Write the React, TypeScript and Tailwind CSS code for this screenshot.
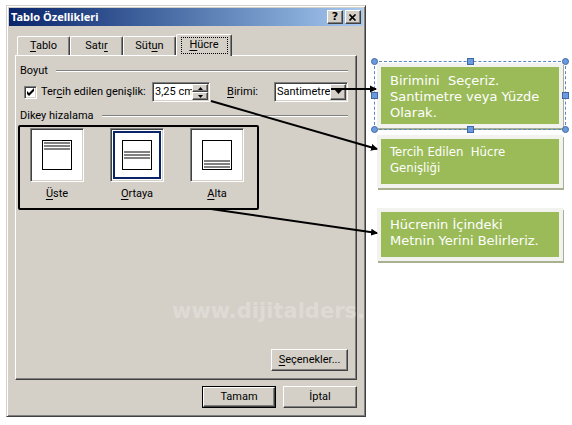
import React, { useState } from "react";

const raised =
  "border border-t-white border-l-white border-r-[#404040] border-b-[#404040] bg-[#d4d0c8] shadow-[inset_-1px_-1px_0_#808080]";
const sunken =
  "border border-t-[#808080] border-l-[#808080] border-r-white border-b-white bg-white shadow-[inset_1px_1px_0_#404040,inset_-1px_-1px_0_#d4d0c8]";

function Key({ children }: { children: React.ReactNode }) {
  return <span className="underline underline-offset-2">{children}</span>;
}

function GroupTitle({ children }: { children: React.ReactNode }) {
  return (
    <div className="flex h-4 items-center gap-2 pl-0.5 leading-4">
      <h2>{children}</h2>
      <div className="h-0.5 flex-1 border-t border-[#808080] bg-white" />
    </div>
  );
}

function Tab({ children, active }: { children: React.ReactNode; active?: boolean }) {
  return (
    <button
      type="button"
      role="tab"
      aria-selected={!!active}
      className={
        active
          ? "relative -mb-px flex h-[22px] w-[56px] items-center justify-center rounded-t-[2px] border border-b-0 border-t-white border-l-white border-r-[#404040] bg-[#d4d0c8] shadow-[inset_-1px_0_0_#808080]"
          : "flex h-[19px] w-[53px] items-center justify-center rounded-t-[2px] border border-b-0 border-t-white border-l-white border-r-[#404040] shadow-[inset_-1px_0_0_#808080]"
      }
    >
      {active ? (
        <span className="flex h-[17px] w-[47px] items-center justify-center border border-dotted border-black">
          <span>{children}</span>
        </span>
      ) : (
        <span>{children}</span>
      )}
    </button>
  );
}

function AlignTile({
  lines,
  selected,
  onSelect,
  children,
}: {
  lines: number;
  selected: boolean;
  onSelect: () => void;
  children: React.ReactNode;
}) {
  return (
    <button
      type="button"
      aria-pressed={selected}
      onClick={onSelect}
      className="flex w-[54px] flex-col items-center gap-1"
    >
      <span className={`flex h-[54px] w-[54px] items-center justify-center ${sunken}`}>
        <span
          className={
            selected
              ? "flex h-12 w-12 items-center justify-center border-2 border-[#0a246a]"
              : "flex h-12 w-12 items-center justify-center"
          }
        >
          <svg width="30" height="30" viewBox="0 0 30 30" shapeRendering="crispEdges">
            <rect x="0.5" y="0.5" width="29" height="29" fill="white" stroke="black" />
            {[0, 3, 6].map((d) => (
              <rect key={d} x="2" y={lines + d} width="26" height="2" fill="#808080" />
            ))}
          </svg>
        </span>
      </span>
      <span className="leading-4">{children}</span>
    </button>
  );
}

function Callout({ children, className }: { children: React.ReactNode; className: string }) {
  return (
    <div
      className={`border-4 border-[#f2f2ee] bg-[#9bbb59] pl-[9px] text-[13px] leading-4 text-white shadow-[1px_2px_0_#a9b090] ${className}`}
    >
      {children}
    </div>
  );
}

function Arrow({ x1, y1, x2, y2 }: { x1: number; y1: number; x2: number; y2: number }) {
  return (
    <line x1={x1} y1={y1} x2={x2} y2={y2} stroke="black" strokeWidth="2" markerEnd="url(#head)" />
  );
}

const handle = "absolute h-[7px] w-[7px] border border-[#41699f] bg-[#6a9ae0]";

export default function App() {
  const [align, setAlign] = useState("mid");
  return (
    <main className="relative flex w-full max-w-[572px] items-start bg-white pt-[5px] pr-[9px] pb-2 pl-[6px] font-['Roboto','DejaVu_Sans_Condensed',sans-serif] text-[11px] text-black">
      <section
        role="dialog"
        aria-label="Tablo Özellikleri"
        className="flex-1 border border-t-[#d4d0c8] border-l-[#d4d0c8] border-r-[#404040] border-b-[#404040] bg-[#d4d0c8] p-0.5 shadow-[inset_1px_1px_0_white,inset_-1px_-1px_0_#808080]"
      >
        <header className="flex h-[18px] items-center gap-0.5 bg-linear-to-r from-[#0a246a] to-[#a6caf0] px-0.5">
          <h1 className="flex-1 font-['Noto_Sans',sans-serif] font-bold text-white">Tablo Özellikleri</h1>
          <button
            type="button"
            aria-label="Yardım"
            className={`flex h-[14px] w-4 items-center justify-center font-['DejaVu_Sans',sans-serif] text-[11px] leading-3 font-bold ${raised}`}
          >
            ?
          </button>
          <button
            type="button"
            aria-label="Kapat"
            className={`flex h-[14px] w-4 items-center justify-center ${raised}`}
          >
            <svg width="8" height="7" viewBox="0 0 8 7">
              <path d="M0.5 0.5L6.5 6.5M6.5 0.5L0.5 6.5" stroke="black" strokeWidth="1.6" />
            </svg>
          </button>
        </header>

        <div className="px-[6px] pt-2 pb-[6px]">
          <div role="tablist" className="flex items-end pl-0.5">
            <Tab><Key>T</Key>ablo</Tab>
            <Tab>Satı<Key>r</Key></Tab>
            <Tab>Süt<Key>u</Key>n</Tab>
            <Tab active><Key>H</Key>ücre</Tab>
          </div>

          <div
            role="tabpanel"
            className="flex min-h-[325px] flex-col border border-t-white border-l-white border-r-[#404040] border-b-[#404040] pt-[7px] pr-2 pb-2 pl-0.5 shadow-[inset_-1px_-1px_0_#808080]"
          >
            <GroupTitle>Boyut</GroupTitle>

            <div className="mt-[3px] flex h-5 items-center pl-[6px]">
              <label className="flex w-32 items-center gap-1 whitespace-nowrap">
                <span className={`grid h-[13px] w-[13px] shrink-0 ${sunken}`}>
                  <input
                    type="checkbox"
                    defaultChecked
                    className="peer col-start-1 row-start-1 h-full w-full appearance-none"
                  />
                  <svg
                    className="pointer-events-none invisible col-start-1 row-start-1 peer-checked:visible"
                    width="11"
                    height="11"
                    viewBox="0 0 11 11"
                  >
                    <path d="M2 4v3l2 2 5-5V1L4 6z" fill="black" />
                  </svg>
                </span>
                <span>
                  Ter<Key>c</Key>ih edilen genişlik:
                </span>
              </label>
              <div className={`flex h-5 w-[58px] p-px ${sunken}`}>
                <input
                  aria-label="Tercih edilen genişlik"
                  defaultValue="3,25 cm"
                  className="w-0 min-w-0 flex-1 pl-px outline-none"
                />
                <div className="flex w-4 flex-col">
                  <button
                    type="button"
                    aria-label="Artır"
                    className={`flex h-2 items-center justify-center ${raised}`}
                  >
                    <svg width="5" height="3" viewBox="0 0 5 3"><path d="M0 3L2.5 0L5 3z" /></svg>
                  </button>
                  <button
                    type="button"
                    aria-label="Azalt"
                    className={`flex h-2 items-center justify-center ${raised}`}
                  >
                    <svg width="5" height="3" viewBox="0 0 5 3"><path d="M0 0L2.5 3L5 0z" /></svg>
                  </button>
                </div>
              </div>
              <label htmlFor="unit" className="ml-auto pr-4">
                <Key>B</Key>irimi:
              </label>
              <div className={`grid h-5 w-[74px] p-px ${sunken}`}>
                <select
                  id="unit"
                  className="col-start-1 row-start-1 h-4 w-full appearance-none pl-px leading-4 outline-none"
                >
                  <option>Santimetre</option>
                  <option>Yüzde</option>
                </select>
                <span
                  className={`pointer-events-none col-start-1 row-start-1 flex h-4 w-4 items-center justify-center justify-self-end ${raised}`}
                >
                  <svg width="7" height="4" viewBox="0 0 7 4"><path d="M0 0L3.5 4L7 0z" /></svg>
                </span>
              </div>
            </div>

            <div className="mt-[6px]">
              <GroupTitle>Dikey hizalama</GroupTitle>
            </div>

            <div className="mt-px flex h-[85px] w-[241px] gap-[26px] rounded-[2px] border-2 border-black pt-px pl-[10px]">
              <AlignTile lines={2} selected={align === "top"} onSelect={() => setAlign("top")}>
                <Key>Ü</Key>ste
              </AlignTile>
              <AlignTile lines={11} selected={align === "mid"} onSelect={() => setAlign("mid")}>
                <Key>O</Key>rtaya
              </AlignTile>
              <AlignTile lines={20} selected={align === "bottom"} onSelect={() => setAlign("bottom")}>
                <Key>A</Key>lta
              </AlignTile>
            </div>

            <button type="button" className={`mt-auto h-[22px] w-[77px] self-end ${raised}`}>
              <Key>S</Key>eçenekler...
            </button>
          </div>

          <footer className="mt-[6px] flex justify-end gap-[7px]">
            <div className="border border-black">
              <button type="button" className={`block h-5 w-[72px] ${raised}`}>
                Tamam
              </button>
            </div>
            <button type="button" className={`h-[22px] w-[74px] ${raised}`}>
              İptal
            </button>
          </footer>
        </div>
      </section>

      <aside className="ml-[11px] w-[186px] shrink-0 pt-[58px] whitespace-nowrap">
        <div className="relative">
          <Callout className="h-[65px] pt-[6px] font-['DejaVu_Sans',sans-serif]">
            Birimini&nbsp; Seçeriz.
            <br />
            Santimetre veya Yüzde
            <br />
            Olarak.
          </Callout>
          <div className="pointer-events-none absolute -inset-x-[3px] -inset-y-[2px] border border-dashed border-[#5b86c4]">
            <i className={`${handle} -top-1 -left-1 rounded-full`} />
            <i className={`${handle} -top-1 left-[92px]`} />
            <i className={`${handle} -top-1 -right-1 rounded-full`} />
            <i className={`${handle} top-[30px] -left-1`} />
            <i className={`${handle} top-[30px] -right-1`} />
            <i className={`${handle} -bottom-1 -left-1 rounded-full`} />
            <i className={`${handle} -bottom-1 left-[92px]`} />
            <i className={`${handle} -right-1 -bottom-1 rounded-full`} />
          </div>
        </div>
        <Callout className="mt-[7px] h-[53px] pt-[5px] font-['DejaVu_Sans_Condensed','DejaVu_Sans',sans-serif]">
          Tercih Edilen&nbsp; Hücre
          <br />
          Genişliği
        </Callout>
        <Callout className="mt-5 h-[53px] pt-[5px] font-['DejaVu_Sans',sans-serif]">
          Hücrenin İçindeki
          <br />
          Metnin Yerini Belirleriz.
        </Callout>
      </aside>

      <div className="pointer-events-none absolute top-[299px] left-[172px] font-['DejaVu_Sans',sans-serif] text-[21px] leading-6 font-bold text-white/25">
        www.dijitalders.com
      </div>

      <svg
        className="pointer-events-none absolute top-0 left-0"
        width="572"
        height="425"
        viewBox="0 0 572 425"
        aria-hidden="true"
      >
        <defs>
          <marker
            id="head"
            markerUnits="userSpaceOnUse"
            markerWidth="7"
            markerHeight="8"
            refX="6"
            refY="4"
            orient="auto"
          >
            <path d="M0 0.5L7 4L0 7.5z" />
          </marker>
        </defs>
        <Arrow x1={331} y1={89} x2={376} y2={89} />
        <Arrow x1={211} y1={101} x2={377} y2={149} />
        <Arrow x1={211} y1={209} x2={377} y2={233} />
      </svg>
    </main>
  );
}
